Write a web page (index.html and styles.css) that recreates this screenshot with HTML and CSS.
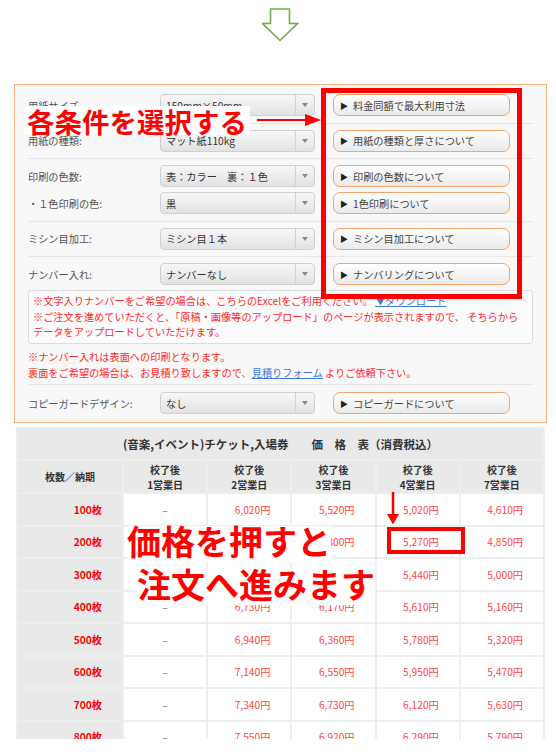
FILE: index.html
```html
<!DOCTYPE html>
<html lang="ja">
<head>
<meta charset="utf-8">
<title>(音楽,イベント)チケット,入場券 価格表</title>
<link rel="stylesheet" href="styles.css">
</head>
<body>
<div class="page">
  <div class="top">
    <svg class="down-arrow" width="37" height="34" viewBox="0 0 37 34" aria-hidden="true">
      <path d="M8.5 1 H27.5 V15.5 H35.5 L18 32.5 L0.5 15.5 H8.5 Z" fill="none" stroke="#70ad47" stroke-width="1.6" stroke-linejoin="miter"/>
    </svg>
  </div>

  <div class="panel">
    <div class="group">
      <div class="row">
        <span class="label">用紙サイズ</span>
        <div class="select"><span class="val">150mm×50mm</span><span class="caret"></span></div>
        <a class="info-btn"><span class="tri">▶</span>料金同額で最大利用寸法</a>
      </div>
    </div>
    <div class="group">
      <div class="row">
        <span class="label">用紙の種類:</span>
        <div class="select"><span class="val">マット紙110kg</span><span class="caret"></span></div>
        <a class="info-btn"><span class="tri">▶</span>用紙の種類と厚さについて</a>
      </div>
    </div>
    <div class="group">
      <div class="row">
        <span class="label">印刷の色数:</span>
        <div class="select"><span class="val">表：カラー　裏：１色</span><span class="caret"></span></div>
        <a class="info-btn"><span class="tri">▶</span>印刷の色数について</a>
      </div>
      <div class="row">
        <span class="label">・１色印刷の色:</span>
        <div class="select"><span class="val">黒</span><span class="caret"></span></div>
        <a class="info-btn"><span class="tri">▶</span>1色印刷について</a>
      </div>
    </div>
    <div class="group">
      <div class="row">
        <span class="label">ミシン目加工:</span>
        <div class="select"><span class="val">ミシン目１本</span><span class="caret"></span></div>
        <a class="info-btn"><span class="tri">▶</span>ミシン目加工について</a>
      </div>
    </div>
    <div class="group number">
      <div class="row">
        <span class="label">ナンバー入れ:</span>
        <div class="select"><span class="val">ナンバーなし</span><span class="caret"></span></div>
        <a class="info-btn"><span class="tri">▶</span>ナンバリングについて</a>
      </div>
      <div class="note">
        <p>※文字入りナンバーをご希望の場合は、こちらのExcelをご利用ください。 <a class="link">▼ダウンロード</a></p>
        <p>※ご注文を進めていただくと、「原稿・画像等のアップロード」のページが表示されますので、 そちらから</p>
        <p>データをアップロードしていただけます。</p>
      </div>
      <p class="red-note">※ナンバー入れは表面への印刷となります。<br>裏面をご希望の場合は、お見積り致しますので、<a class="link">見積りフォーム</a> よりご依頼下さい。</p>
    </div>
    <div class="group last">
      <div class="row">
        <span class="label">コピーガードデザイン:</span>
        <div class="select"><span class="val">なし</span><span class="caret"></span></div>
        <a class="info-btn"><span class="tri">▶</span>コピーガードについて</a>
      </div>
    </div>
  </div>

  <table class="price">
    <colgroup>
      <col class="c-qty"><col><col><col><col><col>
    </colgroup>
    <thead>
      <tr class="title"><th colspan="6">(音楽,イベント)チケット,入場券　　価　格　表（消費税込）</th></tr>
      <tr class="head">
        <th>枚数／納期</th>
        <th>校了後<br>1営業日</th>
        <th>校了後<br>2営業日</th>
        <th>校了後<br>3営業日</th>
        <th>校了後<br>4営業日</th>
        <th>校了後<br>7営業日</th>
      </tr>
    </thead>
    <tbody>
      <tr><th>100枚</th><td class="none">–</td><td>6,020円</td><td>5,520円</td><td>5,020円</td><td>4,610円</td></tr>
      <tr><th>200枚</th><td class="none">–</td><td>6,320円</td><td>5,800円</td><td>5,270円</td><td>4,850円</td></tr>
      <tr><th>300枚</th><td class="none">–</td><td>6,530円</td><td>5,980円</td><td>5,440円</td><td>5,000円</td></tr>
      <tr><th>400枚</th><td class="none">–</td><td>6,730円</td><td>6,170円</td><td>5,610円</td><td>5,160円</td></tr>
      <tr><th>500枚</th><td class="none">–</td><td>6,940円</td><td>6,360円</td><td>5,780円</td><td>5,320円</td></tr>
      <tr><th>600枚</th><td class="none">–</td><td>7,140円</td><td>6,550円</td><td>5,950円</td><td>5,470円</td></tr>
      <tr><th>700枚</th><td class="none">–</td><td>7,340円</td><td>6,730円</td><td>6,120円</td><td>5,630円</td></tr>
      <tr><th>800枚</th><td class="none">–</td><td>7,550円</td><td>6,920円</td><td>6,290円</td><td>5,790円</td></tr>
    </tbody>
  </table>

  <div class="frame"></div>
  <div class="callout">各条件を選択する</div>
  <svg class="callout-arrow" width="66" height="14" viewBox="0 0 66 14" aria-hidden="true">
    <line x1="1" y1="7" x2="51" y2="7" stroke="#ff0000" stroke-width="2"/>
    <polygon points="49,1 65,7 49,13" fill="#ff0000"/>
  </svg>

  <svg class="down-red" width="14" height="33" viewBox="0 0 14 33" aria-hidden="true">
    <line x1="7" y1="0" x2="7" y2="24" stroke="#ff0000" stroke-width="2.5"/>
    <polygon points="1,22 13,22 7,32.5" fill="#ff0000"/>
  </svg>
  <div class="pick"></div>
  <div class="price-callout">
    <span>価格を押すと</span>
    <span class="second">注文へ進みます</span>
  </div>
</div>
</body>
</html>
```

FILE: styles.css
```css
* {
  box-sizing: border-box;
}

html,
body {
  margin: 0;
  padding: 0;
  background: #ffffff;
}

body {
  font-family: "Noto Sans CJK JP", "Noto Sans", sans-serif;
  font-size: 10.2px;
  color: #555555;
}

p {
  margin: 0;
}

.page {
  position: relative;
  width: 556px;
  height: 739px;
  overflow: hidden;
}

/* green arrow at top */
.top {
  height: 84px;
  display: flex;
  justify-content: center;
  padding-top: 7.5px;
}

.down-arrow {
  margin-left: 4px;
}

/* settings panel */
.panel {
  margin: 0 9px 0 14px;
  border: 1px solid #f9b27d;
  background: #f8f8f8;
  padding: 3px 13px 2px;
}

.group {
  display: flex;
  flex-direction: column;
  gap: 5px;
  padding: 6px 0 6.5px;
  border-bottom: 1px solid #e6e6e6;
}

.group.number {
  padding-bottom: 3.5px;
}

.group.last {
  border-bottom: 0;
  padding: 7px 0 6px;
}

.row {
  display: flex;
  align-items: center;
  height: 22px;
}

.label {
  width: 132px;
  color: #555555;
  white-space: nowrap;
}

.select {
  width: 155px;
  height: 22px;
  margin-right: 18px;
  display: flex;
  align-items: center;
  border: 1px solid #d0d0d0;
  border-radius: 4px;
  background: linear-gradient(#f7f7f7, #e2e2e2);
  color: #333333;
}

.select .val {
  flex: 1;
  padding-left: 5px;
  white-space: nowrap;
}

.caret {
  width: 19px;
  height: 100%;
  border-left: 1px solid #d3d3d3;
  display: flex;
  align-items: center;
  justify-content: center;
}

.caret::after {
  content: "";
  border-left: 3.5px solid transparent;
  border-right: 3.5px solid transparent;
  border-top: 4px solid #8a8a8a;
}

.info-btn {
  width: 177px;
  height: 22px;
  display: flex;
  align-items: center;
  padding-left: 6px;
  border: 1px solid #f7a46a;
  border-radius: 7px;
  background: linear-gradient(#ffffff, #eaeaea);
  color: #444444;
  text-decoration: none;
  white-space: nowrap;
}

.tri {
  font-size: 8px;
  color: #222222;
  margin-right: 5px;
}

.note {
  border: 1px solid #dcdcdc;
  border-radius: 3px;
  background: #fbfbfb;
  padding: 2px 4px 3px;
  color: #ff2a2a;
  line-height: 15.5px;
}

.note p {
  white-space: nowrap;
}

.red-note {
  color: #ff2a2a;
  line-height: 16px;
  white-space: nowrap;
}

.link {
  color: #3b78d8;
  text-decoration: underline;
}

/* price table */
.price {
  margin: 4px 0 0 16px;
  width: 529px;
  border-collapse: collapse;
  table-layout: fixed;
}

.c-qty {
  width: 106px;
}

.price th,
.price td {
  border: 2px solid #eeeeee;
  padding: 0;
}

.price .title th {
  height: 32px;
  background: #e9e9e9;
  color: #333333;
  font-size: 11.5px;
  font-weight: 700;
  text-align: center;
}

.price .head th {
  height: 33px;
  background: #e9e9e9;
  color: #333333;
  font-size: 10px;
  line-height: 15px;
  font-weight: 700;
  text-align: center;
}

.price tbody tr {
  height: 32.5px;
}

.price tbody th {
  background: #e9e9e9;
  color: #ff0000;
  font-size: 10.2px;
  font-weight: 700;
  text-align: right;
  padding-right: 20px;
}

.price tbody td {
  background: #ffffff;
  color: #ff4545;
  font-size: 10.2px;
  text-align: right;
  padding-right: 20px;
}

.price tbody td.none {
  color: #777777;
  text-align: center;
  padding-right: 0;
}

/* annotation overlays */
.frame {
  position: absolute;
  left: 321px;
  top: 88px;
  width: 201px;
  height: 211px;
  border: 5px solid #ff0000;
}

.callout {
  position: absolute;
  left: 24px;
  top: 106px;
  padding: 3px 3px 2px;
  background: #ffffff;
  color: #ff0000;
  font-size: 27.5px;
  font-weight: 700;
  line-height: 24px;
  white-space: nowrap;
}

.callout-arrow {
  position: absolute;
  left: 256px;
  top: 112.5px;
}

.down-red {
  position: absolute;
  left: 386px;
  top: 492px;
}

.pick {
  position: absolute;
  left: 386.5px;
  top: 527px;
  width: 78px;
  height: 27px;
  border: 4px solid #ff0000;
}

.price-callout {
  position: absolute;
  left: 127px;
  top: 525.5px;
  display: flex;
  flex-direction: column;
  align-items: flex-start;
  gap: 7px;
}

.price-callout span {
  background: #ffffff;
  color: #ff0000;
  font-size: 34px;
  font-weight: 700;
  line-height: 30px;
  padding-bottom: 6px;
  white-space: nowrap;
}

.price-callout .second {
  margin-left: 10px;
}
```
